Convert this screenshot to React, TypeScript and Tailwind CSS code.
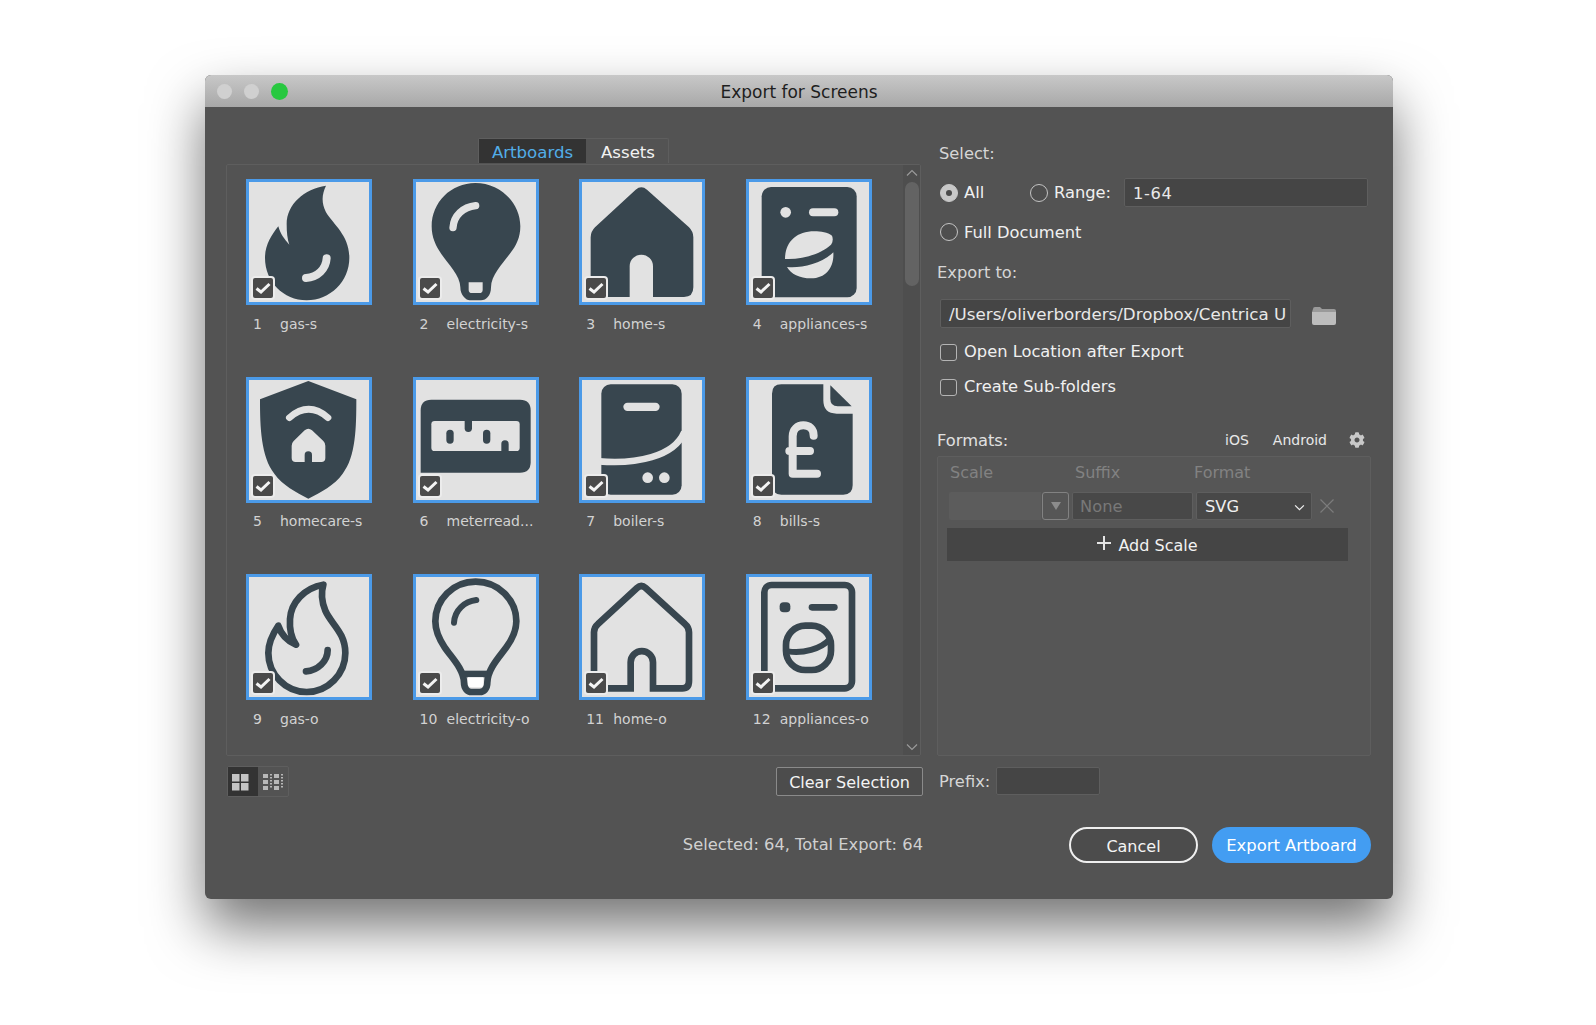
import type { ReactNode } from "react";
import { FaCog } from "react-icons/fa";

const INK = "#38464f";
const PAPER = "#e2e2e2";

const FLAME_SOLID =
  "M240 20 C175 30 122 75 122 135 C122 160 124 180 130 197 C115 180 103 165 97 142 C75 170 57 200 57 237 C57 307 112 364 182 364 C252 364 310 307 310 237 C310 170 265 140 240 100 C225 70 228 45 240 20 Z";
const BULB_SOLID =
  "M187 12 C114 12 56 70 56 142 C56 175 68 200 85 225 C105 255 142 290 142 325 C142 350 160 364 170 364 L204 364 C220 364 234 350 234 325 C234 290 268 255 290 225 C310 200 322 175 322 142 C322 70 260 12 187 12 Z";

const ICONS: ReactNode[] = [
  <>
    <path d={FLAME_SOLID} fill={INK} />
    <path d="M242 238 C240 270 215 295 180 297" fill="none" stroke={PAPER} strokeWidth="24" strokeLinecap="round" />
  </>,
  <>
    <path d={BULB_SOLID} fill={INK} />
    <path d="M120 146 C122 110 150 84 188 80" fill="none" stroke={PAPER} strokeWidth="22" strokeLinecap="round" />
    <path d="M167 310 H209 V332 Q209 342 199 342 H177 Q167 342 167 332 Z" fill={PAPER} />
  </>,
  <path
    d="M170 32 Q187 18 204 32 L330 145 Q343 158 343 175 L343 325 Q343 354 315 354 L222 354 L222 262 A35 35 0 0 0 152 262 L152 354 L60 354 Q35 354 35 325 L35 175 Q35 158 48 145 Z"
    fill={INK}
  />,
  <>
    <rect x="47" y="24" width="285" height="331" rx="28" fill={INK} />
    <circle cx="119" cy="100" r="16" fill={PAPER} />
    <rect x="189" y="88" width="88" height="24" rx="12" fill={PAPER} />
    <path d="M117 240 C117 190 150 157 205 157 C225 157 245 160 258 170 C262 180 260 190 255 197 C225 225 165 243 117 240 Z" fill={PAPER} />
    <path d="M123 264 C165 268 225 255 262 220 C265 265 240 298 195 298 C160 298 135 285 123 264 Z" fill={PAPER} />
  </>,
  <>
    <path d="M187 12 L331 67 C331 150 330 240 290 290 C265 325 225 345 187 365 C150 345 110 325 85 290 C45 240 42 150 42 67 Z" fill={INK} />
    <path d="M130 122 Q188 72 246 122" fill="none" stroke={PAPER} strokeWidth="20" strokeLinecap="round" />
    <path d="M176 160 Q187 150 198 160 L232 192 Q238 198 238 206 V243 Q238 255 226 255 H198 V234 A11 11 0 0 0 176 234 V255 H149 Q137 255 137 243 V206 Q137 198 143 192 Z" fill={PAPER} />
  </>,
  <>
    <path d="M55 68 H321 Q353 68 353 100 V255 Q353 287 321 287 H23 V100 Q23 68 55 68 Z" fill={INK} />
    <rect x="55" y="132" width="265" height="90" rx="10" fill={PAPER} />
    <rect x="100" y="158" width="22" height="42" rx="11" fill={INK} />
    <rect x="210" y="158" width="22" height="42" rx="11" fill={INK} />
    <path d="M155 132 H177 V154 A11 11 0 0 1 155 154 Z" fill={INK} />
    <path d="M265 222 H287 V201 A11 11 0 0 0 265 201 Z" fill={INK} />
  </>,
  <>
    <rect x="67" y="22" width="241" height="331" rx="28" fill={INK} />
    <path d="M60 253 C170 262 285 240 316 165" fill="none" stroke={PAPER} strokeWidth="20" />
    <rect x="133" y="77" width="109" height="25" rx="12.5" fill={PAPER} />
    <circle cx="206" cy="302" r="16" fill={PAPER} />
    <circle cx="256" cy="302" r="16" fill={PAPER} />
  </>,
  <>
    <path d="M106 22 H232 V70 Q232 110 272 110 H320 V325 Q320 353 292 353 H106 Q78 353 78 325 V50 Q78 22 106 22 Z" fill={INK} />
    <path d="M253 25 L317 88 H275 Q253 88 253 66 Z" fill={INK} />
    <path d="M203 176 C203 155 190 145 172 145 C154 145 140 158 140 178 V290 H213 M130 222 H192" fill="none" stroke={PAPER} strokeWidth="24" strokeLinecap="round" strokeLinejoin="round" />
  </>,
  <>
    <path
      d="M232 32 C175 42 135 85 132 135 C130 165 138 195 150 212 C122 200 105 180 97 155 C80 180 67 205 67 237 C67 300 118 354 182 354 C246 354 298 300 298 237 C298 175 255 150 238 110 C228 85 225 55 232 32 Z"
      fill="none"
      stroke={INK}
      strokeWidth="20"
      strokeLinejoin="round"
    />
    <path d="M245 228 C245 262 215 290 180 292" fill="none" stroke={INK} strokeWidth="20" strokeLinecap="round" />
  </>,
  <>
    <path
      d="M188 23 C120 23 67 77 67 142 C67 172 78 195 95 220 C115 250 152 285 153 325 C153 345 165 354 175 354 H200 C212 354 223 345 223 325 C224 285 258 250 280 220 C298 195 310 172 310 142 C310 77 256 23 188 23 Z"
      fill="none"
      stroke={INK}
      strokeWidth="20"
    />
    <path d="M153 300 H223" stroke={INK} strokeWidth="20" />
    <path d="M165 310 H211 V330 Q211 340 200 340 H176 Q165 340 165 330 Z" fill="#ffffff" />
    <path d="M123 146 C125 108 155 82 190 78" fill="none" stroke={INK} strokeWidth="18" strokeLinecap="round" />
  </>,
  <path
    d="M155 343 V265 A33 33 0 0 1 222 265 V343 H310 Q330 343 330 320 V175 Q330 160 318 150 L200 42 Q187 30 174 42 L57 150 Q45 160 45 175 V343 Z"
    fill="none"
    stroke={INK}
    strokeWidth="20"
  />,
  <>
    <rect x="55" y="33" width="263" height="310" rx="22" fill="none" stroke={INK} strokeWidth="20" />
    <rect x="101" y="85" width="32" height="30" rx="12" fill={INK} />
    <path d="M198 100 H265" stroke={INK} strokeWidth="20" strokeLinecap="round" />
    <rect x="120" y="155" width="135" height="133" rx="58" fill="none" stroke={INK} strokeWidth="20" />
    <path d="M125 232 C170 240 225 225 252 195" fill="none" stroke={INK} strokeWidth="18" />
  </>,
];

const TILES = [
  "gas-s",
  "electricity-s",
  "home-s",
  "appliances-s",
  "homecare-s",
  "meterread...",
  "boiler-s",
  "bills-s",
  "gas-o",
  "electricity-o",
  "home-o",
  "appliances-o",
];

function Tile({ index, name }: { index: number; name: string }) {
  return (
    <div className="flex flex-col">
      <div className="relative h-[126px] w-[126px] border-[3px] border-[#4b9ae8] bg-[#e2e2e2]">
        <svg viewBox="9 9 360 360" className="h-full w-full">
          {ICONS[index]}
        </svg>
        <div className="absolute bottom-[2px] left-[2px] flex h-[24px] w-[24px] items-center justify-center rounded-[4px] bg-[#ececec]">
          <div className="flex h-[20px] w-[20px] items-center justify-center rounded-[2px] bg-[#4a4a4a]">
            <svg viewBox="0 0 20 20" className="h-[20px] w-[20px]">
              <path d="M3.5 10.5 L8 14 L16.5 6" fill="none" stroke="#f4f4f4" strokeWidth="3" />
            </svg>
          </div>
        </div>
      </div>
      <div className="mt-[10px] flex h-[18px] items-center pl-[7px] text-[14px] text-[#d2d2d2]">
        <span className="w-[27px]">{index + 1}</span>
        <span>{name}</span>
      </div>
    </div>
  );
}

function Radio({ on = false }: { on?: boolean }) {
  return (
    <span
      className={`flex h-[18px] w-[18px] items-center justify-center rounded-full border ${
        on ? "border-[#c8c8c8] bg-[#c8c8c8]" : "border-[#c4c4c4] bg-[#4e4e4e]"
      }`}
    >
      {on && <span className="h-[6px] w-[6px] rounded-full bg-[#4a4a4a]" />}
    </span>
  );
}

function Check({ label, className }: { label: string; className: string }) {
  return (
    <div className={`flex h-[20px] items-center pl-[3px] ${className}`}>
      <span className="h-[17px] w-[17px] rounded-[3px] border border-[#b4b4b4] bg-[#4e4e4e]" />
      <span className="ml-[7px] text-[#f0f0f0]">{label}</span>
    </div>
  );
}

export default function App() {
  return (
    <div className="min-h-[1025px] bg-white pl-[205px] pt-[75px] font-['DejaVu_Sans','Liberation_Sans',sans-serif] text-[16.3px]">
      <div className="h-[824px] w-[1188px] overflow-hidden rounded-[6px] bg-[#535353] shadow-[0_28px_55px_rgba(0,0,0,0.55)]">
        <div className="relative flex h-[32px] items-center justify-center bg-gradient-to-b from-[#c8c8c8] to-[#a8a8a8]">
          <div className="absolute left-[12px] top-[9px] flex gap-[12px]">
            <span className="h-[15px] w-[15px] rounded-full bg-[#d0d0d0]" />
            <span className="h-[15px] w-[15px] rounded-full bg-[#d0d0d0]" />
            <span className="h-[17px] w-[17px] -translate-y-px rounded-full bg-[#28c840]" />
          </div>
          <span className="pt-[3px] text-[17px] text-[#1e1e1e]">Export for Screens</span>
        </div>

        <div className="flex pl-[21px]">
          <div className="w-[697px] pt-[31px]">
            <div className="flex w-[695px] justify-center">
              <div className="flex h-[25px] rounded-t-[2px] border-x border-t border-[#5e5e5e] text-[16.6px]">
                <span className="flex w-[107px] items-center justify-center bg-[#333333] pt-[4px] text-[#52ade8]">Artboards</span>
                <span className="flex w-[82px] items-center justify-center pl-[2px] pt-[4px] text-[#f2f2f2]">Assets</span>
              </div>
            </div>
            <div className="mt-px flex h-[592px] w-[695px] overflow-hidden rounded-[2px] border border-[#5e5e5e]">
              <div className="grid flex-1 grid-cols-[126px_126px_126px_126px] content-start gap-x-[40.6px] gap-y-[43.5px] pl-[19px] pt-[14px]">
                {TILES.map((name, i) => (
                  <Tile key={name} index={i} name={name} />
                ))}
              </div>
              <div className="flex w-[17px] flex-col items-center bg-[#4e4e4e]">
                <svg viewBox="0 0 12 8" className="mt-[4px] h-[8px] w-[12px]">
                  <path d="M1 6.5 L6 1.5 L11 6.5" fill="none" stroke="#9a9a9a" strokeWidth="1.2" />
                </svg>
                <div className="mt-[5px] h-[104px] w-[14px] rounded-full bg-[#636363]" />
                <svg viewBox="0 0 12 8" className="mb-[4px] mt-auto h-[8px] w-[12px]">
                  <path d="M1 1.5 L6 6.5 L11 1.5" fill="none" stroke="#9a9a9a" strokeWidth="1.2" />
                </svg>
              </div>
            </div>
            <div className="mt-[10px] flex items-start justify-between">
              <div className="ml-px flex h-[31px] w-[62px] rounded-[2px] border border-[#5e5e5e]">
                <div className="flex w-[30px] items-center bg-[#333333] pl-[3px]">
                  <svg viewBox="0 0 18 18" className="h-[18px] w-[18px]" fill="#c4c4c4">
                    <rect x="1" y="1" width="7.5" height="7.5" />
                    <rect x="10" y="1" width="7.5" height="7.5" />
                    <rect x="1" y="10" width="7.5" height="7.5" />
                    <rect x="10" y="10" width="7.5" height="7.5" />
                  </svg>
                </div>
                <div className="flex flex-1 items-center justify-center">
                  <svg viewBox="0 0 20 18" className="h-[18px] w-[20px]" fill="#b8b8b8">
                    <rect x="0" y="1" width="5" height="4" />
                    <rect x="7" y="1" width="2" height="1.5" />
                    <rect x="7" y="4" width="2" height="1.5" />
                    <rect x="11" y="1" width="5" height="4" />
                    <rect x="18" y="1" width="2" height="1.5" />
                    <rect x="18" y="4" width="2" height="1.5" />
                    <rect x="0" y="7" width="5" height="4" />
                    <rect x="7" y="7" width="2" height="1.5" />
                    <rect x="7" y="10" width="2" height="1.5" />
                    <rect x="11" y="7" width="5" height="4" />
                    <rect x="18" y="7" width="2" height="1.5" />
                    <rect x="18" y="10" width="2" height="1.5" />
                    <rect x="0" y="13" width="5" height="4" />
                    <rect x="7" y="13" width="2" height="1.5" />
                    <rect x="11" y="13" width="5" height="4" />
                    <rect x="18" y="13" width="2" height="1.5" />
                  </svg>
                </div>
              </div>
              <div className="mt-[1px] flex h-[29px] w-[147px] items-center justify-center rounded-[2px] border border-[#8a8a8a] bg-[#4c4c4c] pt-[3px] text-[16px] text-[#f4f4f4]">
                Clear Selection
              </div>
            </div>
          </div>

          <div className="w-[449px] pl-[14px] pt-[37px] text-[#f0f0f0]">
            <div className="h-[20px] pl-[2px] leading-[20px] text-[#d6d6d6]">Select:</div>
            <div className="mt-[14px] flex h-[29px] items-center pl-[3px]">
              <Radio on />
              <span className="ml-[6px] mt-[2px] w-[66px]">All</span>
              <Radio />
              <span className="ml-[6px] mt-[2px] w-[70px]">Range:</span>
              <div className="flex h-[29px] w-[244px] items-center rounded-[2px] border border-[#5e5e5e] bg-[#454545] pl-[8px] pt-[3px] tracking-[0.6px] text-[#e8e8e8]">
                1-64
              </div>
            </div>
            <div className="mt-[15px] flex h-[20px] items-center pl-[3px]">
              <Radio />
              <span className="ml-[6px] mt-[2px]">Full Document</span>
            </div>
            <div className="mt-[21px] h-[20px] leading-[20px] text-[#d6d6d6]">Export to:</div>
            <div className="mt-[16px] flex items-center pl-[3px]">
              <div className="flex h-[29px] w-[351px] items-center overflow-hidden whitespace-nowrap rounded-[2px] border border-[#5e5e5e] bg-[#454545] pl-[8px] pt-[3px] text-[16.7px] text-[#e8e8e8]">
                /Users/oliverborders/Dropbox/Centrica U
              </div>
              <svg viewBox="0 0 24 19" className="ml-[21px] mt-[4px] h-[19px] w-[24px]">
                <path d="M1 3 Q1 1 3 1 H8 L10 3 H22 Q24 3 24 5 V6 H0 Z" fill="#9a9a9a" />
                <path d="M0 6 H24 V17 Q24 19 22 19 H2 Q0 19 0 17 Z" fill="#bdbdbd" />
              </svg>
            </div>
            <Check className="mt-[14px]" label="Open Location after Export" />
            <Check className="mt-[15px]" label="Create Sub-folders" />
            <div className="mt-[33px] flex h-[20px] items-center">
              <span className="mt-[2px] text-[#e0e0e0]">Formats:</span>
              <span className="ml-auto text-[14px] text-[#e8e8e8]">iOS</span>
              <span className="ml-[24px] text-[14px] text-[#e8e8e8]">Android</span>
              <FaCog className="ml-[22px] mr-[7px] h-[16px] w-[16px] text-[#c8c8c8]" />
            </div>
            <div className="mt-[6px] h-[300px] w-[434px] rounded-[2px] border border-[#5e5e5e] bg-[#565656] pl-[11px] pt-[6px]">
              <div className="flex h-[20px] items-center pl-[1px] text-[16px] text-[#828282]">
                <span className="w-[125px]">Scale</span>
                <span className="w-[119px]">Suffix</span>
                <span>Format</span>
              </div>
              <div className="mt-[9px] flex h-[28px] items-center">
                <div className="h-[28px] w-[92px] rounded-l-[2px] bg-[#5c5c5c]" />
                <div className="ml-px flex h-[28px] w-[27px] items-center justify-center rounded-[3px] border border-[#828282]">
                  <svg viewBox="0 0 10 8" className="h-[8px] w-[10px]">
                    <path d="M0 0 H10 L5 8 Z" fill="#8c8c8c" />
                  </svg>
                </div>
                <div className="ml-[3px] flex h-[28px] w-[121px] items-center rounded-[2px] border border-[#5e5e5e] bg-[#484848] pl-[7px] pt-[3px] text-[#787878]">
                  None
                </div>
                <div className="ml-[3px] flex h-[28px] w-[116px] items-center rounded-[2px] border border-[#5e5e5e] bg-[#484848] pl-[8px] pt-[3px] text-[#f0f0f0]">
                  SVG
                  <svg viewBox="0 0 12 8" className="ml-auto mr-[6px] h-[7px] w-[11px]">
                    <path d="M1 1.5 L6 6.5 L11 1.5" fill="none" stroke="#f0f0f0" strokeWidth="1.4" />
                  </svg>
                </div>
                <svg viewBox="0 0 14 14" className="ml-[8px] h-[14px] w-[14px]">
                  <path d="M0.5 0.5 L13.5 13.5 M13.5 0.5 L0.5 13.5" stroke="#7c7c7c" strokeWidth="1.2" />
                </svg>
              </div>
              <div className="-ml-[2px] mt-[8px] flex h-[33px] w-[401px] items-center justify-center bg-[#454545] text-[16px] text-[#f2f2f2]">
                <svg viewBox="0 0 14 14" className="mb-[4px] mr-[7px] h-[14px] w-[14px]">
                  <path d="M7 0 V14 M0 7 H14" stroke="#e4e4e4" strokeWidth="2" />
                </svg>
                <span className="pt-[2px]">Add Scale</span>
              </div>
            </div>
            <div className="mt-[11px] flex h-[28px] items-center pl-[2px]">
              <span className="mt-[3px] w-[57px] text-[#d6d6d6]">Prefix:</span>
              <div className="h-[28px] w-[104px] rounded-[2px] border border-[#5e5e5e] bg-[#454545]" />
            </div>
          </div>
        </div>

        <div className="mt-[30px] flex h-[36px] items-center pl-[22px]">
          <div className="w-[696px] text-right text-[#d0d0d0]">Selected: 64, Total Export: 64</div>
          <div className="ml-[146px] flex h-[36px] w-[129px] items-center justify-center rounded-full border-2 border-[#efefef] bg-[#4c4c4c] pt-[3px] text-[16px] text-[#f4f4f4]">
            Cancel
          </div>
          <div className="ml-[14px] flex h-[36px] w-[159px] items-center justify-center rounded-full bg-[#439df2] pt-[3px] text-[16.4px] text-white">
            Export Artboard
          </div>
        </div>
      </div>
    </div>
  );
}
